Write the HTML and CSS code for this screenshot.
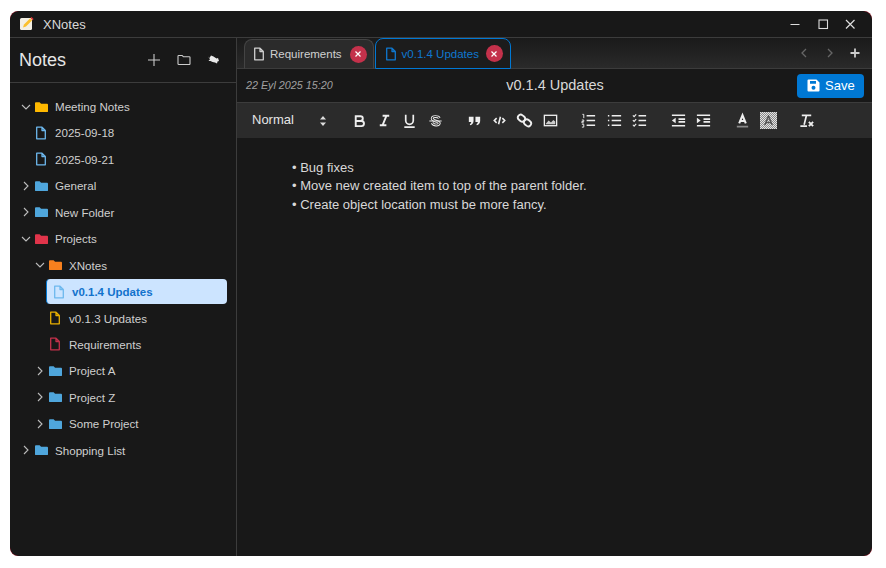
FILE: index.html
```html
<!DOCTYPE html>
<html lang="en">
<head>
  <meta charset="UTF-8">
  <meta name="viewport" content="width=device-width, initial-scale=1.0">
  <title>XNotes</title>
  <link rel="stylesheet" href="styles.css">
</head>
<body>
  <!-- shared icons -->
  <svg class="icon-defs" width="0" height="0">
    <symbol id="folder" viewBox="0 0 14 12"><path fill="currentColor" d="M0 2a1 1 0 0 1 1-1h4l1.500 1.500H13a1 1 0 0 1 1 1V10.500a1 1 0 0 1-1 1H1a1 1 0 0 1-1-1z"/></symbol>
    <symbol id="file" viewBox="0 0 12 14"><path fill="none" stroke="currentColor" stroke-width="1.300" stroke-linejoin="round" d="M1.700 1.200h5.300l3.300 3.300v8.300H1.700zM7 1.200v3.300h3.300"/></symbol>
    <symbol id="open" viewBox="0 0 12 12"><path fill="none" stroke="currentColor" stroke-width="1.100" d="M2 4l4 4 4-4"/></symbol>
    <symbol id="closed" viewBox="0 0 12 12"><path fill="none" stroke="currentColor" stroke-width="1.100" d="M4 2l4 4-4 4"/></symbol>
    <symbol id="x" viewBox="0 0 10 10"><path fill="none" stroke="currentColor" stroke-width="1.200" d="M2.500 2.500l5 5M7.500 2.500l-5 5"/></symbol>
  </svg>

  <div class="window">
    <header class="titlebar">
      <svg class="app-logo" width="16" height="16" viewBox="0 0 16 16">
        <rect x="1" y="2" width="12" height="12" rx="1.500" fill="#f3efe4"/>
        <path fill="#fbc02d" d="M4 11.500l1-3L11 2.500l2 2-6 6z"/>
        <path fill="#e53935" d="M11.500 2l1-1 2 2-1 1.500z"/>
      </svg>
      <span class="app-name">XNotes</span>
      <div class="window-controls">
        <svg width="12" height="12" viewBox="0 0 12 12"><path stroke="#ddd" stroke-width="1" d="M1.500 6.500h9"/></svg>
        <svg width="12" height="12" viewBox="0 0 12 12"><rect x="2" y="2" width="8.500" height="8.500" fill="none" stroke="#ddd" stroke-width="1.100"/></svg>
        <svg width="12" height="12" viewBox="0 0 12 12"><path stroke="#ddd" stroke-width="1.200" d="M2 2l8.500 8.500M10.500 2L2 10.500"/></svg>
      </div>
    </header>

    <div class="body">
      <aside class="sidebar">
        <div class="sidebar-head">
          <h1>Notes</h1>
          <div class="sidebar-actions">
            <svg width="14" height="14" viewBox="0 0 14 14"><path stroke="#ccc" stroke-width="1.100" d="M7 1v12M1 7h12"/></svg>
            <svg width="14" height="12" viewBox="0 0 14 12"><path fill="none" stroke="#ccc" stroke-width="1.100" d="M1 2.200a.7.700 0 0 1 .7-.7h3.500l1.300 1.300h5.800a.7.700 0 0 1 .7.700v6.300a.7.700 0 0 1-.7.700H1.700a.7.700 0 0 1-.7-.7z"/></svg>
            <svg width="13" height="12" viewBox="0 0 13 12"><path fill="#e8e8e8" d="M1 2.500L2.500 4 4 1.500l2.500 1 3 2 1.500-.5 1 3-1.500.5-.5 2-2-1-2.500-.5L3.500 7 1.500 7 3 5.200z"/></svg>
          </div>
        </div>
        <ul class="tree">
          <li class="row d0"><svg class="chev"><use href="#open"/></svg><svg class="folder c-yellow"><use href="#folder"/></svg>Meeting Notes</li>
          <li class="row d0 leaf"><svg class="file c-blue"><use href="#file"/></svg>2025-09-18</li>
          <li class="row d0 leaf"><svg class="file c-blue"><use href="#file"/></svg>2025-09-21</li>
          <li class="row d0"><svg class="chev"><use href="#closed"/></svg><svg class="folder c-blue"><use href="#folder"/></svg>General</li>
          <li class="row d0"><svg class="chev"><use href="#closed"/></svg><svg class="folder c-blue"><use href="#folder"/></svg>New Folder</li>
          <li class="row d0"><svg class="chev"><use href="#open"/></svg><svg class="folder c-red"><use href="#folder"/></svg>Projects</li>
          <li class="row d1"><svg class="chev"><use href="#open"/></svg><svg class="folder c-orange"><use href="#folder"/></svg>XNotes</li>
          <li class="row d1 leaf selected"><svg class="file c-blue"><use href="#file"/></svg>v0.1.4 Updates</li>
          <li class="row d1 leaf"><svg class="file c-yellow"><use href="#file"/></svg>v0.1.3 Updates</li>
          <li class="row d1 leaf"><svg class="file c-red"><use href="#file"/></svg>Requirements</li>
          <li class="row d1"><svg class="chev"><use href="#closed"/></svg><svg class="folder c-blue"><use href="#folder"/></svg>Project A</li>
          <li class="row d1"><svg class="chev"><use href="#closed"/></svg><svg class="folder c-blue"><use href="#folder"/></svg>Project Z</li>
          <li class="row d1"><svg class="chev"><use href="#closed"/></svg><svg class="folder c-blue"><use href="#folder"/></svg>Some Project</li>
          <li class="row d0"><svg class="chev"><use href="#closed"/></svg><svg class="folder c-blue"><use href="#folder"/></svg>Shopping List</li>
        </ul>
      </aside>

      <main class="main">
        <div class="tabbar">
          <div class="tab">
            <svg class="tab-file"><use href="#file"/></svg>
            <span>Requirements</span>
            <span class="tab-close"><svg width="10" height="10"><use href="#x"/></svg></span>
          </div>
          <div class="tab active">
            <svg class="tab-file"><use href="#file"/></svg>
            <span>v0.1.4 Updates</span>
            <span class="tab-close"><svg width="10" height="10"><use href="#x"/></svg></span>
          </div>
          <div class="tab-nav">
            <svg width="12" height="12" viewBox="0 0 12 12"><path fill="none" stroke="#666" stroke-width="1.300" d="M8 2L4 6l4 4"/></svg>
            <svg width="12" height="12" viewBox="0 0 12 12"><path fill="none" stroke="#666" stroke-width="1.300" d="M4 2l4 4-4 4"/></svg>
            <svg width="12" height="12" viewBox="0 0 12 12"><path stroke="#ccc" stroke-width="1.800" d="M6 1.500v9M1.500 6h9"/></svg>
          </div>
        </div>

        <div class="note-head">
          <span class="note-date">22 Eyl 2025 15:20</span>
          <span class="note-title">v0.1.4 Updates</span>
          <button class="save-btn">
            <svg width="13" height="13" viewBox="0 0 13 13"><path fill="#fff" fill-rule="evenodd" d="M1.500 0.500h8l3 3v8a1 1 0 0 1-1 1h-10a1 1 0 0 1-1-1v-10a1 1 0 0 1 1-1zM3 2v2.800h6V2zM6.500 6.800a2 2 0 1 0 0 4 2 2 0 0 0 0-4z"/></svg>
            Save
          </button>
        </div>

        <div class="toolbar">
          <div class="tb-select">
            <span>Normal</span>
            <svg width="8" height="10" viewBox="0 0 8 10"><path fill="#ddd" d="M4 0l3 3.500H1zM4 10L1 6.500h6z"/></svg>
          </div>
          <div class="tb-group">
            <svg class="tb-icon" viewBox="0 0 18 18"><path class="s" stroke-width="2" d="M5 4.500h5a2.500 2.500 0 0 1 0 5H5zM5 9.500h6a2.700 2.700 0 0 1 0 5.500H5z"/></svg>
            <svg class="tb-icon" viewBox="0 0 18 18"><path class="s" stroke-width="2" d="M7 4h7M4 14h7M11 4L7 14"/></svg>
            <svg class="tb-icon" viewBox="0 0 18 18"><path class="s" stroke-width="1.800" d="M5 3v6a4 4 0 0 0 8 0V3M3.500 16h11"/></svg>
            <svg class="tb-icon" viewBox="0 0 18 18"><path class="s" stroke-width="3" d="M13 6.500C12 4.500 5.500 4 5.500 7S13 9.500 13 12c-.5 2.500-6 2.500-7.500-.5"/><path class="s-cut" stroke-width="1.100" d="M13 6.500C12 4.500 5.500 4 5.500 7S13 9.500 13 12c-.5 2.500-6 2.500-7.500-.5"/><path class="s" stroke-width="1.200" d="M2.500 9.500h13"/></svg>
          </div>
          <div class="tb-group">
            <svg class="tb-icon" viewBox="0 0 18 18"><path fill="#eee" d="M3 5h5v4.500C8 12 6.500 13.500 4.500 14l-.5-1.300c1-.4 1.500-1.200 1.500-2.200H3zM10 5h5v4.500c0 2.500-1.500 4-3.500 4.500l-.5-1.300c1-.4 1.500-1.200 1.500-2.200H10z"/></svg>
            <svg class="tb-icon" viewBox="0 0 18 18"><path class="s" stroke-width="1.700" d="M6 6.500L3.500 9 6 11.500M12 6.500L14.500 9 12 11.500M10 5L8 13"/></svg>
            <svg class="tb-icon" viewBox="0 0 18 18"><g class="s" stroke-width="2"><rect x="1.800" y="3.500" width="8" height="6" rx="3" transform="rotate(40 5.800 6.500)"/><rect x="8.200" y="8.500" width="8" height="6" rx="3" transform="rotate(40 12.200 11.500)"/></g></svg>
            <svg class="tb-icon" viewBox="0 0 18 18"><rect class="s" x="2.500" y="3.500" width="13" height="11" stroke-width="1.400"/><path fill="#ccc" d="M4 12.500l3-3.500 2.500 2L12 8.500l2 1.500v3H4z"/></svg>
          </div>
          <div class="tb-group">
            <svg class="tb-icon" viewBox="0 0 18 18"><path class="s" stroke-width="1.600" d="M7 4h9M7 9h9M7 14h9"/><path class="s" stroke-width="1" d="M2.500 2.500h1.500v4M2 8.500h2v1.500H2v1.500h2M2 13h2v3H2"/></svg>
            <svg class="tb-icon" viewBox="0 0 18 18"><path class="s" stroke-width="1.600" d="M6 4h10M6 9h10M6 14h10M2 4h1.500M2 9h1.500M2 14h1.500"/></svg>
            <svg class="tb-icon" viewBox="0 0 18 18"><path class="s" stroke-width="1.600" d="M8 4h8M8 9h8M8 14h8"/><path class="s" stroke-width="1.200" d="M2 3.500l1.300 1.500L5.500 2.500M2 8.500L3.300 10l2.200-2.500M2 13.500L3.300 15l2.200-2.500"/></svg>
          </div>
          <div class="tb-group">
            <svg class="tb-icon" viewBox="0 0 18 18"><path class="s" stroke-width="1.700" d="M2 3.500h14M9 7.500h7M9 10.500h7M2 14.500h14"/><path fill="#eee" d="M6 6v6L2 9z"/></svg>
            <svg class="tb-icon" viewBox="0 0 18 18"><path class="s" stroke-width="1.700" d="M2 3.500h14M9 7.500h7M9 10.500h7M2 14.500h14"/><path fill="#eee" d="M2 6v6l4-3z"/></svg>
          </div>
          <div class="tb-group">
            <svg class="tb-icon" viewBox="0 0 18 18"><path class="s" stroke-width="2.200" d="M5.500 12L9 3.500 12.500 12M6.500 9.500h5"/><path stroke="#888" stroke-width="1.800" d="M3 15.500h12"/></svg>
            <div class="tb-icon tb-dither"><svg width="11" height="11" viewBox="0 0 11 11"><path fill="none" stroke="#555" stroke-width="1.500" d="M1.800 10L5.500 1l3.700 9M3 7.500h5"/></svg></div>
          </div>
          <div class="tb-group">
            <svg class="tb-icon" viewBox="0 0 18 18"><path class="s" stroke-width="1.800" d="M4 3.500h10M9 3.500L6.500 13.500M2.500 15h7"/><path class="s" stroke-width="2" d="M11.500 10.500l4.500 4.500M16 10.500L11.500 15"/></svg>
          </div>
        </div>

        <div class="editor">
          <p>• Bug fixes</p>
          <p>• Move new created item to top of the parent folder.</p>
          <p>• Create object location must be more fancy.</p>
        </div>
      </main>
    </div>
  </div>
</body>
</html>
```

FILE: styles.css
```css
* {
  box-sizing: border-box;
}

html, body {
  height: 100%;
}

body {
  margin: 0;
  padding: 11px 14px 12px 10px;
  background-color: #fff;
  font-family: "Liberation Sans", Arial, sans-serif;
  color: #ddd;
  overflow: hidden;
}

svg {
  display: block;
  flex: none;
}

.icon-defs {
  position: absolute;
}

/* the dark red shows only at the rounded corners */
.window {
  display: flex;
  flex-direction: column;
  height: 100%;
  background-color: #7a0c1c;
  border-radius: 8px;
  overflow: hidden;
}

.titlebar {
  display: flex;
  align-items: center;
  height: 27px;
  padding: 0 16px 0 9px;
  background-color: #181818;
  border-bottom: 1px solid #3c3c3c;
  border-radius: 9px 9px 0 0;
  flex: none;
}

.app-name {
  margin-left: 8px;
  font-size: 13px;
  color: #d8d8d8;
}

.window-controls {
  display: flex;
  gap: 15.500px;
  margin-left: auto;
}

.body {
  display: flex;
  flex: 1;
  min-height: 0;
  background-color: #181818;
  border-radius: 0 0 9px 9px;
}

.sidebar {
  width: 227px;
  border-right: 1px solid #3c3c3c;
  flex: none;
}

.sidebar-head {
  display: flex;
  align-items: center;
  justify-content: space-between;
  height: 45px;
  padding: 0 16px 0 9px;
  border-bottom: 1px solid #3c3c3c;
}

.sidebar-head h1 {
  margin: 0;
  font-size: 18px;
  font-weight: 400;
  color: #e6e6e6;
}

.sidebar-actions {
  display: flex;
  align-items: center;
  gap: 16px;
}

.tree {
  list-style: none;
  margin: 0;
  padding: 10.310px 9px 0 0;
}

.row {
  display: flex;
  align-items: center;
  height: 26.450px;
  font-size: 11.600px;
  color: #cfcfcf;
}

.d0 {
  padding-left: 10px;
}

.d1 {
  padding-left: 24px;
}

.leaf.d0 {
  padding-left: 25px;
}

.leaf.d1 {
  padding-left: 39px;
}

.chev {
  width: 12px;
  height: 12px;
  margin-right: 3px;
  color: #bbb;
}

.folder {
  width: 13px;
  height: 12px;
  margin-right: 7px;
}

.file {
  width: 12px;
  height: 14px;
  margin-right: 8px;
}

.c-yellow {
  color: #ffb900;
}

.c-blue {
  color: #4fa6dc;
}

.c-red {
  color: #e0344a;
}

.c-orange {
  color: #f7801e;
}

.file.c-blue {
  color: #6db8ee;
}

.file.c-yellow {
  color: #eab000;
}

.file.c-red {
  color: #c4314b;
}

.row.selected {
  height: 25px;
  margin: 0.415px 0 1.035px 36px;
  padding-top: 1px;
  padding-left: 6px;
  background-color: #cce4ff;
  border-left: 1px solid #0078d4;
  border-radius: 4px;
  font-size: 11.500px;
  font-weight: 700;
  color: #1272cc;
}

.selected .file {
  color: #6db8ee;
  margin-right: 7px;
}

.main {
  display: flex;
  flex-direction: column;
  flex: 1;
  min-width: 0;
}

.tabbar {
  display: flex;
  align-items: flex-end;
  gap: 1px;
  height: 31px;
  padding-left: 7px;
  background: linear-gradient(#1a1a1a, #2a2a2a);
  border-bottom: 1px solid #3c3c3c;
  flex: none;
}

.tab {
  display: flex;
  align-items: center;
  height: 30px;
  margin-bottom: -1px;
  padding: 0 6px 0 8px;
  background-color: #2b2b2b;
  border: 1px solid #444;
  border-bottom-color: #3c3c3c;
  border-radius: 8px 8px 0 0;
  font-size: 11.500px;
  color: #d0d0d0;
}

.tab.active {
  height: 31px;
  padding: 0 7px 0 9px;
  background-color: #1c1c1c;
  border-color: #0078d4;
  color: #0f78d0;
}

.tab.active .tab-close {
  margin-left: 7px;
}

.tab-file {
  width: 12px;
  height: 14px;
  margin-right: 5px;
}

.tab-close {
  display: flex;
  align-items: center;
  justify-content: center;
  width: 17px;
  height: 17px;
  margin-left: 8px;
  background-color: #c4314b;
  border-radius: 50%;
  color: #fff;
}

.tab-nav {
  display: flex;
  align-items: center;
  gap: 13.500px;
  align-self: center;
  margin-left: auto;
  padding-right: 11px;
}

.note-head {
  display: grid;
  grid-template-columns: 1fr auto 1fr;
  align-items: center;
  height: 33px;
  padding: 0 8px 0 9px;
  flex: none;
}

.note-date {
  padding-bottom: 2px;
  font-size: 10.750px;
  font-style: italic;
  color: #a0a0a0;
}

.note-title {
  padding-bottom: 2px;
  font-size: 14.500px;
  color: #d8d8d8;
}

.save-btn {
  display: flex;
  align-items: center;
  justify-self: end;
  gap: 5px;
  width: 67px;
  height: 24px;
  padding: 0 0 0 10px;
  background-color: #0078d4;
  color: #fff;
  border: none;
  border-radius: 4px;
  font-family: inherit;
  font-size: 13px;
}

.toolbar {
  display: flex;
  align-items: center;
  height: 36px;
  padding: 0 0 0 15px;
  background-color: #2b2b2b;
  border-top: 1px solid #3c3c3c;
  flex: none;
}

.tb-select {
  display: flex;
  align-items: center;
  justify-content: space-between;
  width: 75px;
  margin-right: 19.500px;
  font-size: 13px;
  color: #e6e6e6;
}

.tb-select span {
  margin-top: -2px;
}

.tb-group {
  display: flex;
  margin-right: 13.400px;
}

.tb-icon {
  width: 17px;
  height: 17px;
  margin: 0 4.200px;
}

/* speckled swatch behind the background colour letter */
.tb-dither {
  display: flex;
  align-items: center;
  justify-content: center;
  background-color: #e4e4e4;
  background-image: conic-gradient(#8a8a8a 25%, transparent 0 50%, #8a8a8a 0 75%, transparent 0);
  background-size: 2px 2px;
}

.s {
  fill: none;
  stroke: #eee;
}

.s-cut {
  fill: none;
  stroke: #2b2b2b;
}

.editor {
  flex: 1;
  padding: 21px 55px;
  font-size: 13.030px;
  line-height: 18.400px;
  color: #d8d8d8;
}

.editor p {
  margin: 0;
}
```
